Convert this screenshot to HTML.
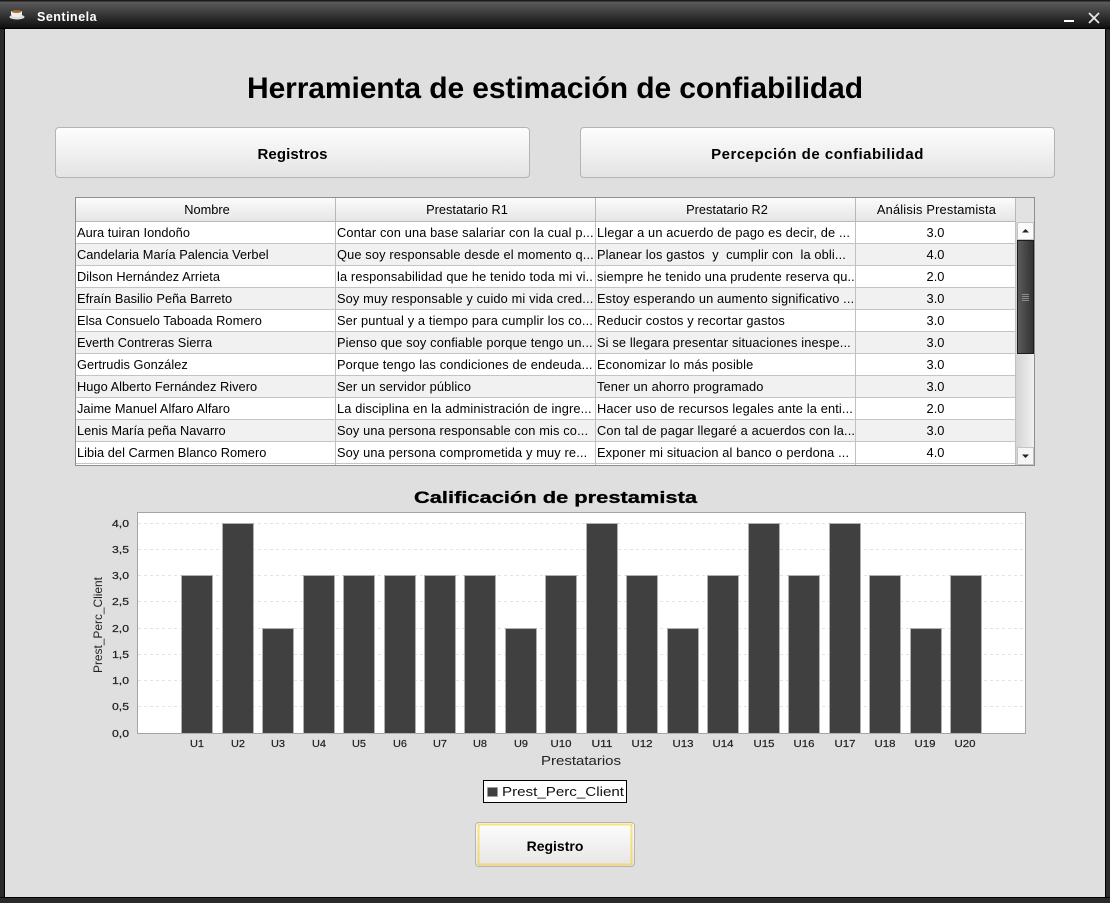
<!DOCTYPE html>
<html><head><meta charset="utf-8"><style>
html,body{margin:0;padding:0;background:#dfdfdf}
#w{position:relative;width:1110px;height:903px;overflow:hidden;background:#dfdfdf;font-family:"Liberation Sans",sans-serif;color:#000}
#w div{position:absolute;box-sizing:border-box}
.b{border:1px solid #b4b4b4;border-radius:4px;background:linear-gradient(#fdfdfd,#e4e4e4)}
.l{white-space:nowrap;overflow:hidden;font-size:12.8px;line-height:21px;height:21px;letter-spacing:.03px}
.l[style*="left:337"],.l[style*="left:597"]{letter-spacing:.14px}
.h{white-space:nowrap;font-size:12.8px;line-height:24px;height:24px;text-align:center;top:198px;padding-left:3px;background:linear-gradient(#fbfbfb,#e6e6e6);border-right:1px solid #b8b8b8;border-bottom:1px solid #b8b8b8}
.r{left:76px;width:940px;height:22px;border-bottom:1px solid #c4c4c4}
.v{top:222px;width:1px;height:243px;background:#c0c0c0}
svg{position:absolute;left:0;top:0}
</style></head><body><div id="w">
<div style="left:0;top:0;width:1110px;height:29px;background:linear-gradient(#1a1a1a,#1a1a1a 1px,#5a5a5a 2px,#3c3c3c 45%,#0e0e0e);border-bottom:1px solid #000"></div>
<div style="left:0;top:29px;width:5px;height:874px;background:#2a2a2a;border-right:1px solid #000"></div>
<div style="left:1105px;top:29px;width:5px;height:874px;background:#2a2a2a;border-left:1px solid #000"></div>
<div style="left:0;top:897px;width:1110px;height:6px;background:#2a2a2a;border-top:1px solid #000"></div>
<svg width="1110" height="903" style="z-index:1">
<ellipse cx="17" cy="17" rx="7.5" ry="2.5" fill="#ddd"/><path d="M11 11h11v3c0 2-2 3-5 3s-6-1-6-3z" fill="#eee"/><ellipse cx="16.500" cy="11.500" rx="5" ry="1.500" fill="#a86a28"/>
<rect x="1064" y="20" width="10" height="2" fill="#fff"/>
<path d="M1089 13l10 10M1099 13l-10 10" stroke="#e8e8e8" stroke-width="1.800"/>
</svg>
<div style="left:37px;top:9px;font-size:12.5px;line-height:17px;font-weight:bold;color:#fff;letter-spacing:.5px">Sentinela</div>

<div style="left:55px;top:72px;width:1000px;text-align:center;font-size:30px;line-height:34px;font-weight:bold;letter-spacing:-.1px;white-space:nowrap">Herramienta de estimación de confiabilidad</div>

<div class="b" style="left:55px;top:127px;width:475px;height:51px;text-align:center;font-size:15px;font-weight:bold;line-height:54px;letter-spacing:.1px">Registros</div>
<div class="b" style="left:580px;top:127px;width:475px;height:51px;text-align:center;font-size:15px;font-weight:bold;line-height:54px;letter-spacing:.5px">Percepción de confiabilidad</div>

<div style="left:75px;top:197px;width:960px;height:269px;border:1px solid #8e8e8e;background:#fff"></div>
<div class="h" style="left:76px;width:260px">Nombre</div>
<div class="h" style="left:336px;width:260px">Prestatario R1</div>
<div class="h" style="left:596px;width:260px">Prestatario R2</div>
<div class="h" style="left:856px;width:160px;padding-left:2px;letter-spacing:.2px">Análisis Prestamista</div>
<div style="left:1016px;top:198px;width:18px;height:24px;background:#e2e2e2"></div>

<div class="r" style="top:222px;background:#fff"></div>
<div class="r" style="top:244px;background:#f1f1f1"></div>
<div class="r" style="top:266px;background:#fff"></div>
<div class="r" style="top:288px;background:#f1f1f1"></div>
<div class="r" style="top:310px;background:#fff"></div>
<div class="r" style="top:332px;background:#f1f1f1"></div>
<div class="r" style="top:354px;background:#fff"></div>
<div class="r" style="top:376px;background:#f1f1f1"></div>
<div class="r" style="top:398px;background:#fff"></div>
<div class="r" style="top:420px;background:#f1f1f1"></div>
<div class="r" style="top:442px;background:#fff"></div>
<div class="v" style="left:335px"></div><div class="v" style="left:595px"></div><div class="v" style="left:855px"></div><div class="v" style="left:1015px"></div>

<div class="l" style="left:77px;top:222px;width:257px">Aura tuiran Iondoño</div><div class="l" style="left:337px;top:222px;width:257px">Contar con una base salariar con la cual p...</div><div class="l" style="left:597px;top:222px;width:257px">Llegar a un acuerdo de pago es decir, de ...</div><div class="l" style="left:856px;top:222px;width:159px;text-align:center">3.0</div>
<div class="l" style="left:77px;top:244px;width:257px">Candelaria María Palencia Verbel</div><div class="l" style="left:337px;top:244px;width:257px">Que soy responsable desde el momento q...</div><div class="l" style="left:597px;top:244px;width:257px">Planear los gastos&nbsp; y&nbsp; cumplir con&nbsp; la obli...</div><div class="l" style="left:856px;top:244px;width:159px;text-align:center">4.0</div>
<div class="l" style="left:77px;top:266px;width:257px">Dilson Hernández Arrieta</div><div class="l" style="left:337px;top:266px;width:257px">la responsabilidad que he tenido toda mi vi...</div><div class="l" style="left:597px;top:266px;width:257px">siempre he tenido una prudente reserva qu...</div><div class="l" style="left:856px;top:266px;width:159px;text-align:center">2.0</div>
<div class="l" style="left:77px;top:288px;width:257px">Efraín Basilio Peña Barreto</div><div class="l" style="left:337px;top:288px;width:257px">Soy muy responsable y cuido mi vida cred...</div><div class="l" style="left:597px;top:288px;width:257px">Estoy esperando un aumento significativo ...</div><div class="l" style="left:856px;top:288px;width:159px;text-align:center">3.0</div>
<div class="l" style="left:77px;top:310px;width:257px">Elsa Consuelo Taboada Romero</div><div class="l" style="left:337px;top:310px;width:257px">Ser puntual y a tiempo para cumplir los co...</div><div class="l" style="left:597px;top:310px;width:257px">Reducir costos y recortar gastos</div><div class="l" style="left:856px;top:310px;width:159px;text-align:center">3.0</div>
<div class="l" style="left:77px;top:332px;width:257px">Everth Contreras Sierra</div><div class="l" style="left:337px;top:332px;width:257px">Pienso que soy confiable porque tengo un...</div><div class="l" style="left:597px;top:332px;width:257px">Si se llegara presentar situaciones inespe...</div><div class="l" style="left:856px;top:332px;width:159px;text-align:center">3.0</div>
<div class="l" style="left:77px;top:354px;width:257px">Gertrudis González</div><div class="l" style="left:337px;top:354px;width:257px">Porque tengo las condiciones de endeuda...</div><div class="l" style="left:597px;top:354px;width:257px">Economizar lo más posible</div><div class="l" style="left:856px;top:354px;width:159px;text-align:center">3.0</div>
<div class="l" style="left:77px;top:376px;width:257px">Hugo Alberto Fernández Rivero</div><div class="l" style="left:337px;top:376px;width:257px">Ser un servidor público</div><div class="l" style="left:597px;top:376px;width:257px">Tener un ahorro programado</div><div class="l" style="left:856px;top:376px;width:159px;text-align:center">3.0</div>
<div class="l" style="left:77px;top:398px;width:257px">Jaime Manuel Alfaro Alfaro</div><div class="l" style="left:337px;top:398px;width:257px">La disciplina en la administración de ingre...</div><div class="l" style="left:597px;top:398px;width:257px">Hacer uso de recursos legales ante la enti...</div><div class="l" style="left:856px;top:398px;width:159px;text-align:center">2.0</div>
<div class="l" style="left:77px;top:420px;width:257px">Lenis María peña Navarro</div><div class="l" style="left:337px;top:420px;width:257px">Soy una persona responsable con mis co...</div><div class="l" style="left:597px;top:420px;width:257px">Con tal de pagar llegaré a acuerdos con la...</div><div class="l" style="left:856px;top:420px;width:159px;text-align:center">3.0</div>
<div class="l" style="left:77px;top:442px;width:257px">Libia del Carmen Blanco Romero</div><div class="l" style="left:337px;top:442px;width:257px">Soy una persona comprometida y muy re...</div><div class="l" style="left:597px;top:442px;width:257px">Exponer mi situacion al banco o perdona ...</div><div class="l" style="left:856px;top:442px;width:159px;text-align:center">4.0</div>

<div style="left:1016px;top:222px;width:18px;height:243px;background:linear-gradient(90deg,#d4d4d4,#f0f0f0)"></div>
<div style="left:1017px;top:222px;width:17px;height:18px;background:#fbfbfb;border:1px solid #c4c4c4"></div>
<div style="left:1017px;top:240px;width:17px;height:114px;background:linear-gradient(90deg,#5a5a5a,#333);border:1px solid #1c1c1c"></div>
<div style="left:1017px;top:447px;width:17px;height:18px;background:#f6f6f6;border:1px solid #c4c4c4"></div>
<svg width="1110" height="903" style="z-index:2">
<path d="M1022 232.500l3.500-3.500 3.500 3.500z" fill="#222"/>
<path d="M1022 454.500h7l-3.500 3.500z" fill="#222"/>
<path d="M1022 294.500h7M1022 296.500h7M1022 298.500h7M1022 300.500h7" stroke="#8c8c8c"/>

<text x="555.500" y="503" text-anchor="middle" font-family="Liberation Sans" font-size="17" font-weight="bold" stroke="#000" stroke-width=".3" textLength="283" lengthAdjust="spacingAndGlyphs">Calificación de prestamista</text>
<rect x="137.500" y="512.500" width="888" height="221" fill="#fff" stroke="#a4a4a4"/>
<g stroke="#e4e4e4" stroke-dasharray="3 3">
<path d="M138 523.500h887M138 549.500h887M138 575.500h887M138 601.500h887M138 628.500h887M138 654.500h887M138 680.500h887M138 706.500h887"/>
</g>
<g fill="#404040" stroke="#b0b0b0">
<rect x="181.500" y="575.500" width="31" height="158"/>
<rect x="222.500" y="523.500" width="31" height="210"/>
<rect x="262.500" y="628.500" width="31" height="105"/>
<rect x="303.500" y="575.500" width="31" height="158"/>
<rect x="343.500" y="575.500" width="31" height="158"/>
<rect x="384.500" y="575.500" width="31" height="158"/>
<rect x="424.500" y="575.500" width="31" height="158"/>
<rect x="464.500" y="575.500" width="31" height="158"/>
<rect x="505.500" y="628.500" width="31" height="105"/>
<rect x="545.500" y="575.500" width="31" height="158"/>
<rect x="586.500" y="523.500" width="31" height="210"/>
<rect x="626.500" y="575.500" width="31" height="158"/>
<rect x="667.500" y="628.500" width="31" height="105"/>
<rect x="707.500" y="575.500" width="31" height="158"/>
<rect x="748.500" y="523.500" width="31" height="210"/>
<rect x="788.500" y="575.500" width="31" height="158"/>
<rect x="829.500" y="523.500" width="31" height="210"/>
<rect x="869.500" y="575.500" width="31" height="158"/>
<rect x="910.500" y="628.500" width="31" height="105"/>
<rect x="950.500" y="575.500" width="31" height="158"/>
</g>
<g font-family="Liberation Sans" font-size="10" fill="#222" text-anchor="end" stroke="#222" stroke-width=".2">
<text x="129" y="527" textLength="17" lengthAdjust="spacingAndGlyphs">4,0</text>
<text x="129" y="553" textLength="17" lengthAdjust="spacingAndGlyphs">3,5</text>
<text x="129" y="579" textLength="17" lengthAdjust="spacingAndGlyphs">3,0</text>
<text x="129" y="605" textLength="17" lengthAdjust="spacingAndGlyphs">2,5</text>
<text x="129" y="632" textLength="17" lengthAdjust="spacingAndGlyphs">2,0</text>
<text x="129" y="658" textLength="17" lengthAdjust="spacingAndGlyphs">1,5</text>
<text x="129" y="684" textLength="17" lengthAdjust="spacingAndGlyphs">1,0</text>
<text x="129" y="710" textLength="17" lengthAdjust="spacingAndGlyphs">0,5</text>
<text x="129" y="737" textLength="17" lengthAdjust="spacingAndGlyphs">0,0</text>
</g>
<g font-family="Liberation Sans" font-size="10" fill="#222" text-anchor="middle" stroke="#222" stroke-width=".2">
<text x="197" y="747" textLength="14" lengthAdjust="spacingAndGlyphs">U1</text><text x="238" y="747" textLength="14" lengthAdjust="spacingAndGlyphs">U2</text><text x="278" y="747" textLength="14" lengthAdjust="spacingAndGlyphs">U3</text><text x="319" y="747" textLength="14" lengthAdjust="spacingAndGlyphs">U4</text><text x="359" y="747" textLength="14" lengthAdjust="spacingAndGlyphs">U5</text><text x="400" y="747" textLength="14" lengthAdjust="spacingAndGlyphs">U6</text><text x="440" y="747" textLength="14" lengthAdjust="spacingAndGlyphs">U7</text><text x="480" y="747" textLength="14" lengthAdjust="spacingAndGlyphs">U8</text><text x="521" y="747" textLength="14" lengthAdjust="spacingAndGlyphs">U9</text><text x="561" y="747" textLength="21" lengthAdjust="spacingAndGlyphs">U10</text><text x="602" y="747" textLength="21" lengthAdjust="spacingAndGlyphs">U11</text><text x="642" y="747" textLength="21" lengthAdjust="spacingAndGlyphs">U12</text><text x="683" y="747" textLength="21" lengthAdjust="spacingAndGlyphs">U13</text><text x="723" y="747" textLength="21" lengthAdjust="spacingAndGlyphs">U14</text><text x="764" y="747" textLength="21" lengthAdjust="spacingAndGlyphs">U15</text><text x="804" y="747" textLength="21" lengthAdjust="spacingAndGlyphs">U16</text><text x="845" y="747" textLength="21" lengthAdjust="spacingAndGlyphs">U17</text><text x="885" y="747" textLength="21" lengthAdjust="spacingAndGlyphs">U18</text><text x="925" y="747" textLength="21" lengthAdjust="spacingAndGlyphs">U19</text><text x="965" y="747" textLength="21" lengthAdjust="spacingAndGlyphs">U20</text>
</g>
<text x="581" y="765" text-anchor="middle" font-family="Liberation Sans" font-size="13" fill="#222" textLength="80" lengthAdjust="spacingAndGlyphs">Prestatarios</text>
<text transform="translate(102,625) rotate(-90)" text-anchor="middle" font-family="Liberation Sans" font-size="12" fill="#222" textLength="96" lengthAdjust="spacingAndGlyphs">Prest_Perc_Client</text>
<rect x="483.500" y="780.500" width="143" height="22" fill="#fff" stroke="#000"/>
<rect x="487.500" y="787.500" width="10" height="9" fill="#404040" stroke="#999" stroke-width=".6"/>
<text x="502" y="796" font-family="Liberation Sans" font-size="13" fill="#111" textLength="122" lengthAdjust="spacingAndGlyphs">Prest_Perc_Client</text>
</svg>

<div class="b" style="left:475px;top:822px;width:160px;height:45px;text-align:center;font-size:14px;font-weight:bold;line-height:46px;background:linear-gradient(#fdfdfd,#e6e6e6)">Registro</div>
<svg width="1110" height="903" style="z-index:3"><rect x="478.500" y="824.500" width="153" height="40" fill="none" stroke="#ffc800" stroke-width="2" stroke-dasharray="1 1"/></svg>
</div></body></html>
